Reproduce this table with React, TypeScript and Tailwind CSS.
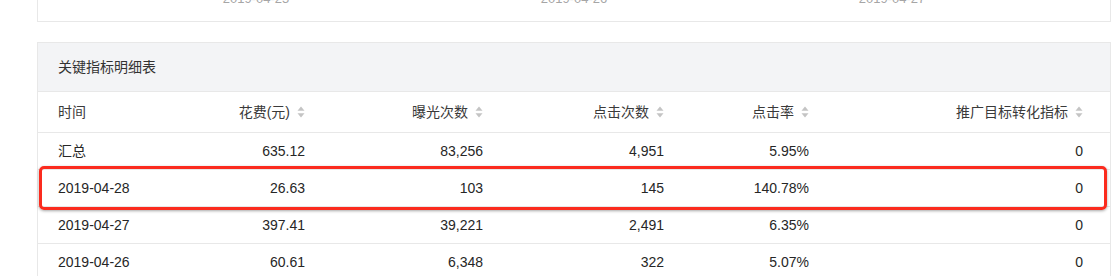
import { ReactNode } from "react";

const font = `"Helvetica Neue", "Liberation Sans", "Noto Sans CJK SC", sans-serif`;

const columns = [
  { title: "时间", sortable: false },
  { title: "花费(元)", sortable: true },
  { title: "曝光次数", sortable: true },
  { title: "点击次数", sortable: true },
  { title: "点击率", sortable: true },
  { title: "推广目标转化指标", sortable: true },
];

const rows = [
  ["汇总", "635.12", "83,256", "4,951", "5.95%", "0"],
  ["2019-04-28", "26.63", "103", "145", "140.78%", "0"],
  ["2019-04-27", "397.41", "39,221", "2,491", "6.35%", "0"],
  ["2019-04-26", "60.61", "6,348", "322", "5.07%", "0"],
];

const axisDates = ["2019-04-25", "2019-04-26", "2019-04-27"];

const SortIcon = () => (
  <svg width="8" height="12" viewBox="0 0 8 12" className="ml-[7px] shrink-0">
    <path d="M4 0.5 L7.5 4.8 H0.5 Z" fill="#c4c4c4" />
    <path d="M4 11.5 L7.5 7.2 H0.5 Z" fill="#c4c4c4" />
  </svg>
);

const Row = ({ children, className }: { children: ReactNode; className: string }) => (
  <div
    className={`grid grid-cols-[140px_127px_178px_181px_145px_274px] pr-[27px] items-center border-b border-[#e8e8e8] ${className}`}
  >
    {children}
  </div>
);

const App = () => {
  return (
    <div
      className="relative h-[276px] w-[1112px] overflow-hidden bg-white"
      style={{ fontFamily: font }}
    >
      {/* bottom of the chart card above, its axis labels cut by the top edge */}
      <div className="ml-[37px] flex h-[22px] w-[1074px] items-start border-x border-b border-[#e8e8e8]">
        <div className="-mt-[10px] flex pl-[59px] text-[13px] leading-[18px] text-[#a6a6a6]">
          {axisDates.map((d) => (
            <span key={d} className="w-[318px] text-center">
              {d}
            </span>
          ))}
        </div>
      </div>

      {/* key metrics table */}
      <div className="ml-[37px] mt-[20px] w-[1074px] border border-[#e8e8e8]">
        <div className="flex h-[49px] items-center border-b border-[#e8e8e8] bg-[#f3f4f6] pl-[20px] text-[14px] text-[#333]">
          关键指标明细表
        </div>

        <Row className="h-[41px] text-[14px] text-[#3a3a3a]">
          {columns.map((c, i) => (
            <div
              key={c.title}
              className={i === 0 ? "pl-[20px]" : "flex items-center justify-end"}
            >
              <span>{c.title}</span>
              {c.sortable && <SortIcon />}
            </div>
          ))}
        </Row>

        {rows.map((r) => (
          <Row key={r[0]} className="h-[37px] text-[14px] text-[#262626]">
            {r.map((cell, i) => (
              <div key={i} className={i === 0 ? "pl-[20px]" : "text-right"}>
                {cell}
              </div>
            ))}
          </Row>
        ))}
      </div>

      {/* highlight annotation */}
      <div className="absolute left-[39px] top-[166px] h-[44px] w-[1068px] rounded-[5px] border-[3px] border-[#fb2b1e] shadow-[0_1px_3px_rgba(0,0,0,0.35)]" />
    </div>
  );
};

export default App;
